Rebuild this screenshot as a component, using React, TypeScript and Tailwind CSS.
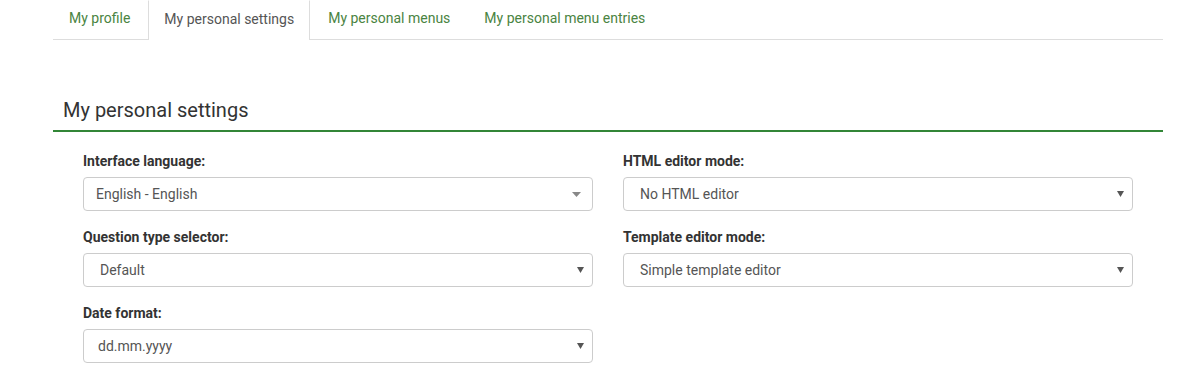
import React from "react";

function NativeArrow() {
  return (
    <svg width="7" height="6" viewBox="0 0 7 6" className="shrink-0">
      <path d="M0 0 L7 0 L3.5 6 Z" fill="#555" />
    </svg>
  );
}

function Select2Arrow() {
  return (
    <svg width="9" height="5" viewBox="0 0 9 5" className="shrink-0">
      <path d="M0 0 L9 0 L4.5 5 Z" fill="#888" />
    </svg>
  );
}

function Field({
  label,
  value,
  select2,
  pl,
}: {
  label: string;
  value: string;
  select2?: boolean;
  pl: string;
}) {
  return (
    <div className="flex flex-col">
      <label className="text-[14px] leading-[20px] font-bold text-[#333] mb-[6px]">{label}</label>
      <div
        className={
          "h-[34px] border border-[#ccc] rounded-[4px] bg-white flex items-center justify-between text-[14px] text-[#555] " +
          pl +
          (select2 ? " pr-[11px]" : " pr-[8px]")
        }
      >
        <span>{value}</span>
        {select2 ? <Select2Arrow /> : <NativeArrow />}
      </div>
    </div>
  );
}

export default function App() {
  const tabs = ["My profile", "My personal settings", "My personal menus", "My personal menu entries"];
  return (
    <div className="w-[1198px] h-[372px] bg-white overflow-hidden" style={{ fontFamily: "Roboto, 'Liberation Sans', sans-serif" }}>
      <div className="ml-[53px] w-[1110px]">
        <div className="flex border-b border-[#ddd] h-[40px]">
          {tabs.map((t, i) => (
            <div
              key={t}
              className={
                "px-[15px] mr-[2px] h-[40px] flex items-center pb-[3px] text-[14px] " +
                (i === 1
                  ? "border border-b-0 border-[#ddd] border-t-transparent text-[#555] bg-white -mb-px"
                  : "text-[#4a8442] border border-transparent")
              }
            >
              {t}
            </div>
          ))}
        </div>
        <div className="mt-[56px] border-b-2 border-[#328637] pl-[10px] pb-[6px]">
          <h2 className="text-[20px] leading-[28px] text-[#333] font-normal">My personal settings</h2>
        </div>
        <div className="px-[30px] pt-[19px] grid grid-cols-2 gap-x-[30px] gap-y-[16px]">
          <Field label="Interface language:" value="English - English" select2 pl="pl-[12px]" />
          <Field label="HTML editor mode:" value="No HTML editor" pl="pl-[16px]" />
          <Field label="Question type selector:" value="Default" pl="pl-[16px]" />
          <Field label="Template editor mode:" value="Simple template editor" pl="pl-[16px]" />
          <Field label="Date format:" value="dd.mm.yyyy" pl="pl-[14px]" />
        </div>
      </div>
    </div>
  );
}
